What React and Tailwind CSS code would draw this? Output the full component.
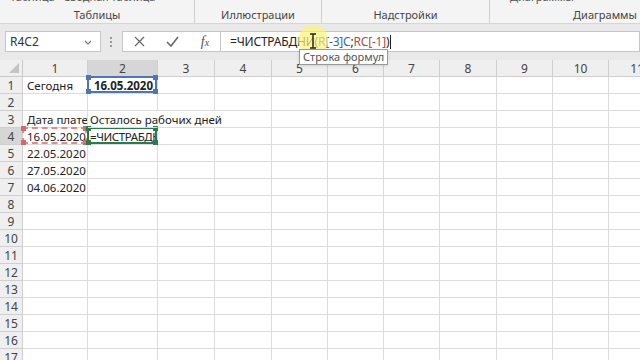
import React from 'react';

const COLS = [65, 70, 57, 57, 56, 56, 56, 57, 56, 56, 57];
const ROWS = 17;

const font = { fontFamily: '"Noto Sans", "Open Sans", sans-serif' };

function Handles({ color }) {
  return (
    <>
      <span className={`absolute -left-[3px] -top-[3px] w-[5px] h-[5px] ${color}`} />
      <span className={`absolute -right-[3px] -top-[3px] w-[5px] h-[5px] ${color}`} />
      <span className={`absolute -left-[3px] -bottom-[3px] w-[5px] h-[5px] ${color}`} />
      <span className={`absolute -right-[3px] -bottom-[3px] w-[5px] h-[5px] ${color}`} />
    </>
  );
}

function Cell({ r, c }) {
  const base = 'relative h-[17px] border-r border-b border-[#dcdcdc] text-[11.5px] leading-[17px] text-[#222] whitespace-nowrap';
  if (r === 1 && c === 0) return <div className={`${base} pl-1`}>Сегодня</div>;
  if (r === 1 && c === 1)
    return (
      <div className={`${base} pr-1 text-right font-bold`}>
        16.05.2020
        <div className="absolute -left-px -top-px right-0 bottom-0 border-2 border-[#4f74b8]">
          <Handles color="bg-[#4f74b8]" />
        </div>
      </div>
    );
  if (r === 3 && c === 0) return <div className={`${base} pl-1 overflow-hidden`}>Дата платежа</div>;
  if (r === 3 && c === 1) return <div className={`${base} pl-0.5 z-10 border-r-transparent`}>Осталось рабочих дней</div>;
  if (r === 3 && c === 2) return <div className={`${base} border-r-transparent`} />;
  if (r === 4 && c === 0)
    return (
      <div className={`${base} pl-1`}>
        16.05.2020
        <div className="absolute -left-px -top-px right-0 bottom-0 border-2 border-dashed border-[#e58a8a]">
          <Handles color="bg-[#d46a6a]" />
        </div>
      </div>
    );
  if (r === 4 && c === 1)
    return (
      <div className={`${base} pl-[2px]`}>
        <div className="overflow-hidden tracking-[-0.4px]">=ЧИСТРАБДН</div>
        <div className="absolute -left-px -top-px right-0 bottom-0 border-2 border-[#2c7a4b]">
          <Handles color="bg-[#2c7a4b]" />
        </div>
      </div>
    );
  if (c === 0 && r >= 5 && r <= 7)
    return <div className={`${base} pl-1`}>{['22.05.2020', '27.05.2020', '04.06.2020'][r - 5]}</div>;
  return <div className={base} />;
}

export default function App() {
  return (
    <div className="w-[640px] h-[360px] overflow-hidden bg-white relative" style={font}>
      {/* Ribbon group labels */}
      <div className="h-[24px] bg-[#f4f4f4] border-b border-[#d6d6d6] flex text-[11px] text-[#444] relative">
        <div className="w-[195px] border-r border-[#d0d0d0] relative">
          <div className="absolute -top-[11px] left-[10px] text-[#555]">Таблица&nbsp;&nbsp;&nbsp;Сводная таблица</div>
          <div className="absolute bottom-0 w-full text-center">Таблицы</div>
        </div>
        <div className="w-[127px] border-r border-[#d0d0d0] relative">
          <div className="absolute bottom-0 w-full text-center">Иллюстрации</div>
        </div>
        <div className="w-[168px] border-r border-[#d0d0d0] relative">
          <div className="absolute bottom-0 w-full text-center">Надстройки</div>
        </div>
        <div className="flex-1 relative">
          <div className="absolute -top-[11px] left-[20px] text-[#555]">Диаграммы</div>
          <div className="absolute bottom-0 w-full text-center pl-[80px]">Диаграммы</div>
        </div>
      </div>

      {/* Formula bar */}
      <div className="h-[36px] bg-[#e9e9e9] flex items-start pt-[7px]">
        <div className="ml-[5px] w-[96px] h-[21px] bg-white border border-[#c6c6c6] flex items-center justify-between px-1 text-[12px] text-[#333]">
          <span>R4C2</span>
          <svg width="8" height="8" viewBox="0 0 8 8" className="mr-1">
            <path d="M1 3 L4 6 L7 3" fill="none" stroke="#777" strokeWidth="1.2" />
          </svg>
        </div>
        <div className="w-[20px] h-[21px] flex flex-col items-center justify-center gap-[2px]">
          <span className="w-[2px] h-[2px] bg-[#999]" />
          <span className="w-[2px] h-[2px] bg-[#999]" />
          <span className="w-[2px] h-[2px] bg-[#999]" />
        </div>
        <div className="ml-[1px] w-[98px] h-[21px] bg-white border-y border-l border-[#c6c6c6] flex items-center justify-around text-[#555]">
          <svg width="11" height="11" viewBox="0 0 11 11">
            <path d="M1 1 L10 10 M10 1 L1 10" stroke="#666" strokeWidth="1.2" />
          </svg>
          <svg width="13" height="11" viewBox="0 0 13 11">
            <path d="M1 6 L5 10 L12 1" fill="none" stroke="#666" strokeWidth="1.6" />
          </svg>
          <span className="italic text-[14px] text-[#555]" style={{ fontFamily: '"Liberation Serif", serif' }}>
            f<span className="text-[10px]">x</span>
          </span>
        </div>
        <div className="flex-1 h-[21px] bg-white border border-[#c6c6c6] flex items-center pl-[9px] text-[12px] tracking-[-0.2px] text-[#222]">
          <span>=ЧИСТРАБДНИ(</span>
          <span className="text-[#3c64b0]">R[-3]C</span>
          <span>;</span>
          <span className="text-[#b5473c]">RC[-1]</span>
          <span>)</span>
          <span className="ml-px w-px h-[14px] bg-[#222]" />
        </div>
      </div>

      {/* Grid */}
      <div className="grid" style={{ gridTemplateColumns: `23px ${COLS.map((w) => w + 'px').join(' ')}` }}>
        <div className="h-[17px] bg-[#efefef] border-r border-b border-[#c8c8c8] relative">
          <svg width="10" height="10" viewBox="0 0 10 10" className="absolute right-[3px] bottom-[3px]">
            <path d="M10 0 L10 10 L0 10 Z" fill="#c4c4c4" />
          </svg>
        </div>
        {COLS.map((_, c) => (
          <div
            key={c}
            className={`h-[17px] border-r border-b border-[#cfcfcf] text-center text-[12px] leading-[17px] text-[#444] ${c === 1 ? 'bg-[#d6d6d6]' : 'bg-[#efefef]'}`}
          >
            {c + 1}
          </div>
        ))}
        {Array.from({ length: ROWS }, (_, i) => i + 1).map((r) => (
          <React.Fragment key={r}>
            <div
              className={`h-[17px] border-r border-b border-[#cfcfcf] text-center text-[12px] leading-[17px] text-[#444] ${r === 4 ? 'bg-[#d6d6d6]' : 'bg-[#efefef]'}`}
            >
              {r}
            </div>
            {COLS.map((_, c) => (
              <Cell key={c} r={r} c={c} />
            ))}
          </React.Fragment>
        ))}
      </div>

      {/* Mouse cursor highlight */}
      <div className="absolute left-[298px] top-[25px] w-[30px] h-[30px] rounded-full bg-[#fff27a]/70 pointer-events-none" />
      <svg width="8" height="16" viewBox="0 0 8 16" className="absolute left-[309px] top-[33px]">
        <path d="M1 1 H7 M4 1 V15 M1 15 H7" stroke="#222" strokeWidth="1.4" fill="none" />
      </svg>

      {/* Tooltip */}
      <div className="absolute left-[299px] top-[49px] h-[16px] px-[3px] bg-white border border-[#9a9a9a] text-[11px] leading-[14px] text-[#555] shadow-sm">
        Строка формул
      </div>
    </div>
  );
}
